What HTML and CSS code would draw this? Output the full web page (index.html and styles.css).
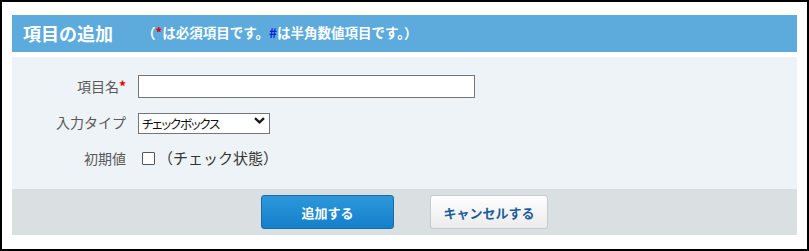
FILE: index.html
```html
<!DOCTYPE html>
<html lang="ja">
<head>
<meta charset="utf-8">
<title>項目の追加</title>
<link rel="stylesheet" href="styles.css">
</head>
<body>
<div class="frame">
  <div class="header">
    <h1 class="title">項目の追加</h1>
    <p class="note">（<span class="req">*</span>は必須項目です。<span class="num">#</span>は半角数値項目です。）</p>
  </div>
  <div class="content">
    <div class="form">
      <label class="label">項目名<span class="req">*</span></label>
      <div class="control"><input class="text-input" type="text"></div>
      <label class="label">入力タイプ</label>
      <div class="control">
        <span class="select-wrap">
          <select class="select"><option>チェックボックス</option></select>
          <svg class="chev" width="11" height="7" viewBox="0 0 11 7"><path d="M1 1.2 L5.5 5.4 L10 1.2" fill="none" stroke="#1a1a1a" stroke-width="2.3"/></svg>
        </span>
      </div>
      <label class="label">初期値</label>
      <div class="control"><input class="check" type="checkbox"><span class="check-text">（チェック状態）</span></div>
    </div>
  </div>
  <div class="footer">
    <button class="btn btn-primary">追加する</button>
    <button class="btn btn-cancel">キャンセルする</button>
  </div>
</div>
</body>
</html>
```
FILE: styles.css
```css
html, body {
  margin: 0;
  padding: 0;
  background: #fff;
}
body {
  font-family: "Noto Sans CJK JP", "Noto Sans", sans-serif;
}
.frame {
  width: 809px;
  height: 251px;
  box-sizing: border-box;
  border: 2px solid #000;
  padding: 13px 10px 0 10px;
}
.header {
  height: 37px;
  box-sizing: border-box;
  background: #5dabdc;
  display: flex;
  align-items: flex-start;
  padding: 8px 0 0 11px;
}
.title {
  margin: 0;
  font-size: 18px;
  line-height: 20px;
  font-weight: bold;
  color: #fff;
}
.note {
  margin: 1px 0 0 29px;
  font-size: 13.5px;
  line-height: 16px;
  font-weight: bold;
  color: #fff;
}
.note .req { color: #e60000; }
.note .num { color: #0a1fd6; }
.content {
  margin-top: 5px;
  height: 132px;
  box-sizing: border-box;
  background: #eef3f7;
  padding: 11px 0 13px;
}
.form {
  display: grid;
  grid-template-columns: 114px 1fr;
  grid-auto-rows: 36px;
  column-gap: 12px;
  align-items: center;
}
.label {
  text-align: right;
  font-size: 14px;
  color: #5a5a5a;
  line-height: 20px;
}
.label .req { color: #e60000; font-weight: bold; }
.control {
  display: flex;
  align-items: center;
}
.text-input {
  width: 337px;
  height: 23px;
  box-sizing: border-box;
  border: 1px solid #767676;
  border-radius: 0;
  background: #fff;
  margin: 0;
  padding: 0 4px;
}
.select-wrap {
  position: relative;
  display: inline-block;
}
.select {
  appearance: none;
  -webkit-appearance: none;
  width: 132px;
  height: 21px;
  box-sizing: border-box;
  border: 1px solid #767676;
  border-radius: 0;
  background: #fff;
  margin: 0;
  padding: 0 0 0 3px;
  font-family: "Noto Sans CJK JP", sans-serif;
  font-size: 12.5px;
  font-feature-settings: "palt";
  letter-spacing: -1.2px;
  color: #111;
  line-height: 19px;
}
.chev {
  position: absolute;
  right: 5px;
  top: 7px;
  pointer-events: none;
}
.check {
  appearance: none;
  -webkit-appearance: none;
  width: 13px;
  height: 13px;
  box-sizing: border-box;
  border: 1px solid #555;
  border-radius: 1px;
  background: #fff;
  margin: 0 0 0 4px;
}
.check-text {
  margin-left: 3px;
  font-size: 15px;
  color: #333;
  line-height: 20px;
}
.footer {
  height: 46px;
  background: #dadfe2;
  display: flex;
  align-items: center;
  justify-content: center;
  gap: 36px;
}
.btn {
  height: 34px;
  box-sizing: border-box;
  border-radius: 3px;
  font-family: "Noto Sans CJK JP", sans-serif;
  font-size: 13px;
  font-weight: bold;
  margin: 0;
  padding: 0;
}
.btn-primary {
  width: 133px;
  color: #fff;
  border: 1px solid #1a6aa8;
  background: linear-gradient(#2c98da, #1580cb);
}
.btn-cancel {
  width: 118px;
  color: #1e5c9a;
  border: 1px solid #c3cad0;
  background: linear-gradient(#ffffff, #ebebeb);
}
```
